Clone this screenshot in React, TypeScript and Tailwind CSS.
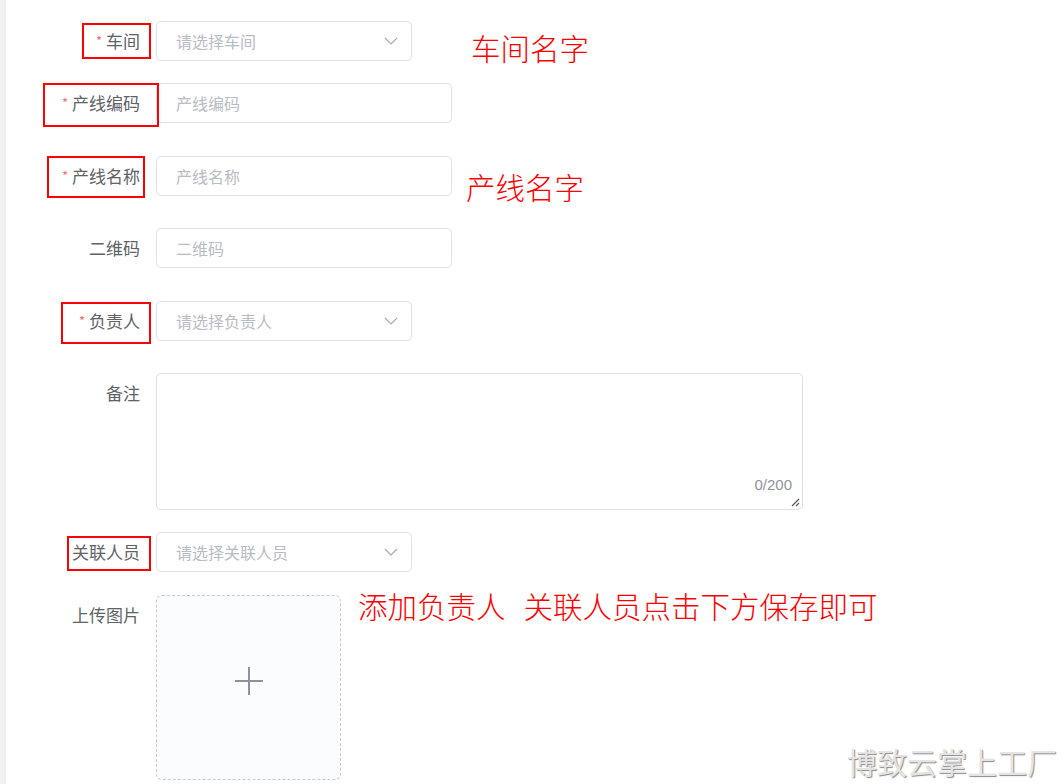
import React from "react";

const FONT = { fontFamily: '"Noto Sans CJK SC", "Noto Sans", sans-serif' };

function Chevron() {
  return (
    <svg width="14" height="8" viewBox="0 0 14 8" className="shrink-0">
      <path d="M1 1 L7 7 L13 1" fill="none" stroke="#a8abb2" strokeWidth="1.2" />
    </svg>
  );
}

function Label({ text, required }: { text: string; required?: boolean }) {
  return (
    <div className="w-[150px] shrink-0 pr-[16px] text-right text-[17px] leading-[40px] text-[#606266]">
      {required && <span className="mr-[4px] align-top text-[13px] text-[#f56c6c]">*</span>}
      {text}
    </div>
  );
}

function Select({ placeholder }: { placeholder: string }) {
  return (
    <div className="flex h-[40px] w-[256px] items-center justify-between rounded-[5px] border border-[#dcdfe6] bg-white pl-[19px] pr-[13px]">
      <span className="text-[16px] text-[#b8bcc4]">{placeholder}</span>
      <Chevron />
    </div>
  );
}

function Input({ placeholder }: { placeholder: string }) {
  return (
    <div className="flex h-[40px] w-[296px] items-center rounded-[5px] border border-[#dcdfe6] bg-white pl-[19px]">
      <span className="text-[16px] text-[#b8bcc4]">{placeholder}</span>
    </div>
  );
}

export default function App() {
  return (
    <div className="relative flex h-[784px] w-[1064px] overflow-hidden bg-white" style={FONT}>
      <div className="h-full w-[6px] shrink-0 bg-[#eef0f4]" />
      <div className="flex flex-col pt-[21px]">
        <div className="flex">
          <Label text="车间" required />
          <Select placeholder="请选择车间" />
        </div>
        <div className="mt-[22px] flex">
          <Label text="产线编码" required />
          <Input placeholder="产线编码" />
        </div>
        <div className="mt-[33px] flex">
          <Label text="产线名称" required />
          <Input placeholder="产线名称" />
        </div>
        <div className="mt-[32px] flex">
          <Label text="二维码" />
          <Input placeholder="二维码" />
        </div>
        <div className="mt-[33px] flex">
          <Label text="负责人" required />
          <Select placeholder="请选择负责人" />
        </div>
        <div className="mt-[32px] flex">
          <Label text="备注" />
          <div className="relative h-[137px] w-[647px] rounded-[5px] border border-[#dcdfe6] bg-white">
            <span
              className="absolute bottom-[15px] right-[10px] text-[15px] leading-[18px] text-[#909399]"
              style={{ fontFamily: '"Liberation Sans", Arial, sans-serif' }}
            >
              0/200
            </span>
            <svg width="10" height="10" viewBox="0 0 10 10" className="absolute bottom-[2px] right-[2px]">
              <path d="M9 2 L2 9 M9 6 L6 9" stroke="#555" strokeWidth="1.2" fill="none" />
            </svg>
          </div>
        </div>
        <div className="mt-[22px] flex">
          <Label text="关联人员" />
          <Select placeholder="请选择关联人员" />
        </div>
        <div className="mt-[23px] flex">
          <Label text="上传图片" />
          <div className="flex h-[185px] w-[185px] items-center justify-center rounded-[6px] border border-dashed border-[#c0ccda] bg-[#fbfcfe]">
            <svg width="28" height="28" viewBox="0 0 28 28" className="mb-[14px]">
              <path d="M14 0 V28 M0 14 H28" stroke="#8c939d" strokeWidth="2" fill="none" />
            </svg>
          </div>
        </div>
      </div>

      {/* red annotation boxes */}
      <div className="pointer-events-none absolute left-[82px] top-[23px] h-[36px] w-[69px] border-2 border-[#ff0000]" />
      <div className="pointer-events-none absolute left-[43px] top-[83px] h-[44px] w-[116px] border-2 border-[#ff0000]" />
      <div className="pointer-events-none absolute left-[47px] top-[156px] h-[42px] w-[98px] border-2 border-[#ff0000]" />
      <div className="pointer-events-none absolute left-[61px] top-[302px] h-[42px] w-[90px] border-2 border-[#ff0000]" />
      <div className="pointer-events-none absolute left-[67px] top-[536px] h-[35px] w-[84px] border-2 border-[#ff0000]" />

      {/* red annotation texts */}
      <div className="absolute left-[471px] top-[26px] text-[29.5px] font-light leading-[42px] text-[#ff0000]">车间名字</div>
      <div className="absolute left-[466px] top-[165px] text-[29.5px] font-light leading-[42px] text-[#ff0000]">产线名字</div>
      <div className="absolute left-[358px] top-[584px] flex text-[29.5px] font-light leading-[42px] text-[#ff0000]">
        <span>添加负责人</span>
        <span className="ml-[18px]">关联人员点击下方保存即可</span>
      </div>

      {/* watermark */}
      <div className="absolute left-[847px] top-[740px] text-[30px] leading-[42px] text-[#e4e4e4] [text-shadow:1px_1px_1px_#8a8a8a]">
        博致云掌上工厂
      </div>
    </div>
  );
}
